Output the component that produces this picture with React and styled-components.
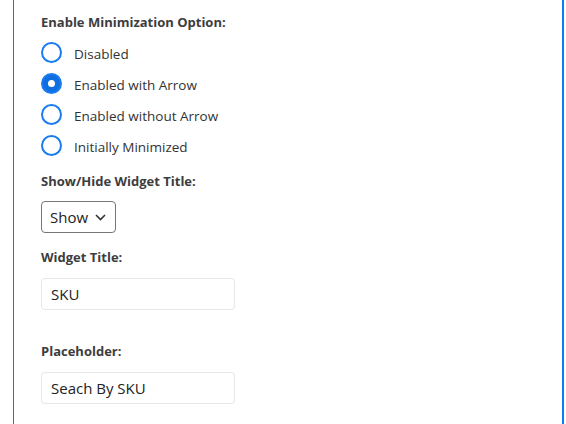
import React from "react";
import styled, { createGlobalStyle } from "styled-components";

const GlobalStyle = createGlobalStyle`
  body {
    margin: 0;
    background: #fff;
    font-family: "Open Sans", "Noto Sans", sans-serif;
  }
`;

const Panel = styled.div`
  margin: -6px 2px 0 13px;
  min-height: 440px;
  border: 1px solid #0a7bf5;
  border-right-width: 2px;
  border-radius: 6px;
  padding: 17px 27px 0 27px;
  box-sizing: border-box;
`;

const Label = styled.div`
  font-size: 13px;
  font-weight: 700;
  line-height: 20px;
  color: #3d3d3d;
  margin-top: ${props => props.top || 0}px;
`;

const RadioGroup = styled.div`
  display: flex;
  flex-direction: column;
  margin-top: 5px;
`;

const RadioRow = styled.label`
  display: flex;
  align-items: center;
  height: 31px;
  gap: 12px;
  font-size: 13.5px;
  color: #333;
  cursor: pointer;
`;

const RadioText = styled.span`
  padding-top: 3px;
`;

const RadioDot = styled.span`
  width: 21px;
  height: 21px;
  flex: none;
  box-sizing: border-box;
  border-radius: 50%;
  border: 2px solid #1a7cf0;
  background: ${props => (props.checked ? "#0f6fe0" : "#fff")};
  display: flex;
  align-items: center;
  justify-content: center;
  &::after {
    content: "";
    width: 7px;
    height: 7px;
    border-radius: 50%;
    background: #fff;
    display: ${props => (props.checked ? "block" : "none")};
  }
`;

const SelectWrap = styled.div`
  position: relative;
  width: 75px;
  margin-top: 10px;
`;

const Select = styled.select`
  appearance: none;
  width: 75px;
  height: 32px;
  border: 1px solid #767676;
  border-radius: 4px;
  background: #fff;
  padding: 0 0 0 8px;
  font-family: inherit;
  font-size: 15px;
  color: #222;
`;

const Chevron = styled.svg`
  position: absolute;
  right: 10px;
  top: 13px;
  pointer-events: none;
`;

const Input = styled.input`
  display: block;
  width: 194px;
  height: 32px;
  box-sizing: border-box;
  margin-top: 11px;
  border: 1px solid #e6e6e6;
  border-radius: 4px;
  padding: 0 9px;
  font-family: inherit;
  font-size: 15px;
  color: #222;
  outline: none;
`;

const options = ["Disabled", "Enabled with Arrow", "Enabled without Arrow", "Initially Minimized"];

export default function App() {
  const [mode, setMode] = React.useState(1);
  return (
    <>
      <GlobalStyle />
      <Panel>
        <Label>Enable Minimization Option:</Label>
        <RadioGroup>
          {options.map((o, i) => (
            <RadioRow key={o} onClick={() => setMode(i)}>
              <RadioDot checked={i === mode} />
              <RadioText>{o}</RadioText>
            </RadioRow>
          ))}
        </RadioGroup>
        <Label top={10}>Show/Hide Widget Title:</Label>
        <SelectWrap>
          <Select defaultValue="show">
            <option value="show">Show</option>
            <option value="hide">Hide</option>
          </Select>
          <Chevron width="11" height="7" viewBox="0 0 11 7">
            <path d="M1 1l4.5 4.5L10 1" fill="none" stroke="#333" strokeWidth="1.6" />
          </Chevron>
        </SelectWrap>
        <Label top={14}>Widget Title:</Label>
        <Input defaultValue="SKU" />
        <Label top={31}>Placeholder:</Label>
        <Input defaultValue="Seach By SKU" />
      </Panel>
    </>
  );
}
